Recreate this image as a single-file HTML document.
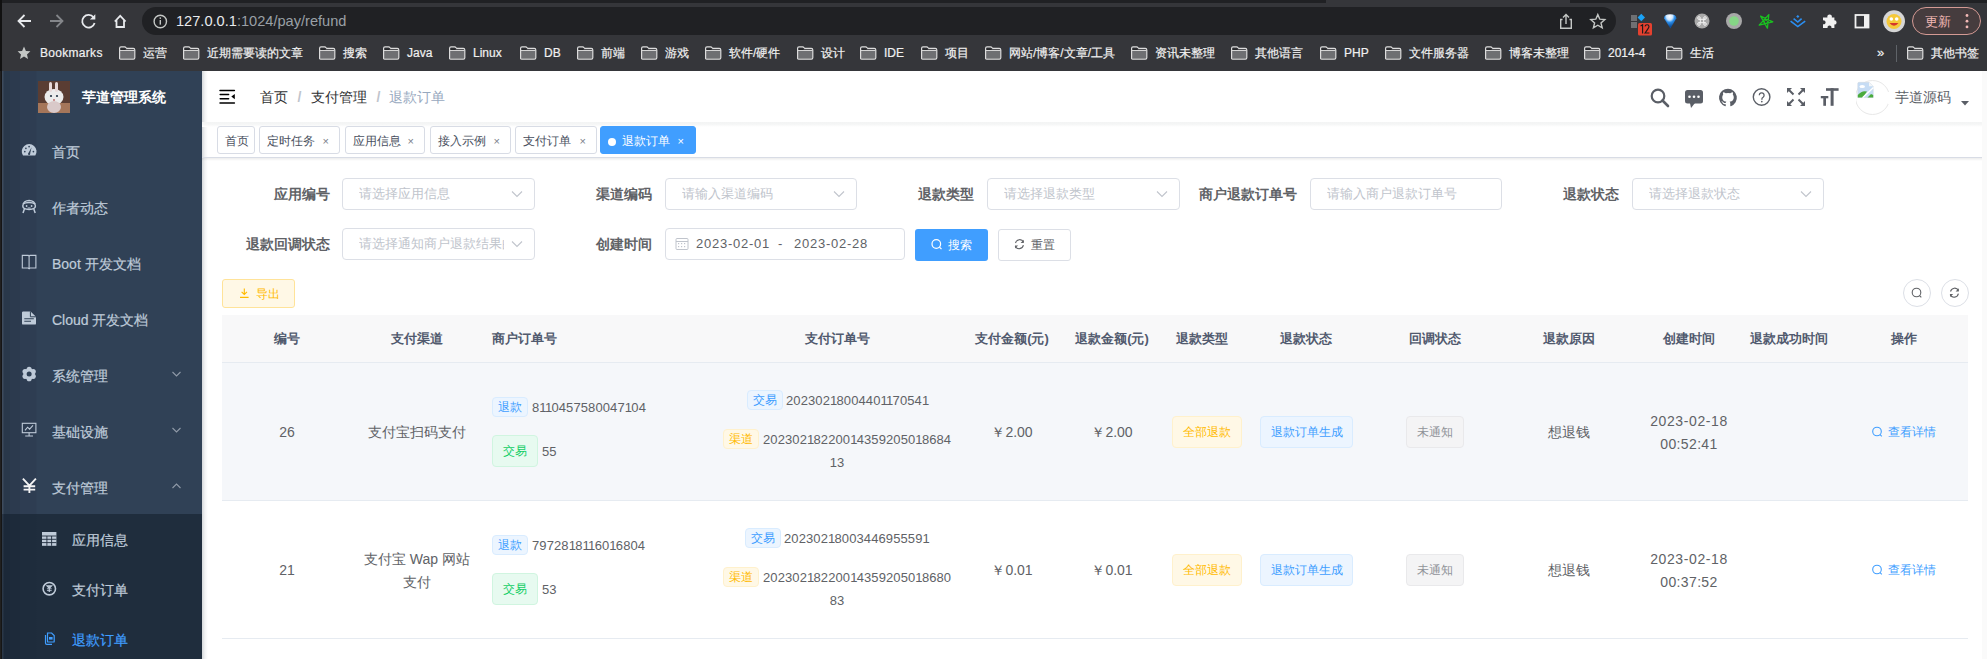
<!DOCTYPE html><html><head><meta charset="utf-8"><style>
*{margin:0;padding:0;box-sizing:border-box}
html,body{width:1987px;height:659px;overflow:hidden;background:#fff;font-family:"Liberation Sans",sans-serif}
.a{position:absolute;white-space:nowrap}
svg{position:absolute;overflow:visible}
#chrome{position:absolute;left:0;top:0;width:1987px;height:71px;background:#35363a}
.bm{position:absolute;top:44px;height:18px;font-size:12px;color:#f0f0f0;-webkit-text-stroke:.2px currentColor;line-height:18px;white-space:nowrap}
.fd{position:absolute;top:48.5px;width:16px;height:10.6px;border:1.6px solid #c9c9c9;border-radius:2px;background:#6b6c6f}
.fd:before{content:"";position:absolute;left:-1.6px;top:-2.6px;width:6.5px;height:2.4px;border:1.6px solid #c9c9c9;border-bottom:none;border-radius:2px 2px 0 0}
.fd:after{content:"";position:absolute;left:0;top:0;width:100%;height:2.5px;background:#35363a;border-bottom:1.2px solid #c9c9c9}
#side{position:absolute;left:0;top:71px;width:202px;height:588px;background:#304156}
.mi{position:absolute;font-size:14px;color:#bfcbd9;-webkit-text-stroke:.2px currentColor;line-height:20px;white-space:nowrap}
.tag{position:absolute;top:126px;height:28px;border:1px solid #d8dce5;border-radius:3px;color:#495060;background:#fff;font-size:12px;line-height:28px;white-space:nowrap}
.lbl{position:absolute;font-size:14px;font-weight:bold;color:#606266;line-height:20px;white-space:nowrap;text-align:right}
.inp{position:absolute;height:32px;border:1px solid #dcdfe6;border-radius:4px;background:#fff}
.ph{position:absolute;font-size:13px;color:#c0c4cc;line-height:30px;white-space:nowrap;top:0}
.th{position:absolute;top:329px;font-size:13px;font-weight:bold;color:#515a6e;line-height:20px;white-space:nowrap;text-align:center}
.td{position:absolute;font-size:14px;color:#606266;line-height:20px;white-space:nowrap}
.mt{position:absolute;height:20px;border:1px solid;border-radius:4px;font-size:12px;line-height:18px;text-align:center;white-space:nowrap}
.dt{position:absolute;height:32px;border:1px solid;border-radius:4px;font-size:12px;line-height:30px;text-align:center;white-space:nowrap}
.blue{background:#ecf5ff;border-color:#d9ecff;color:#409eff}
.green{background:#e7faf0;border-color:#d0f5e0;color:#13ce66}
.orange{background:#fff8e6;border-color:#fff1cc;color:#ffba00}
.grey{background:#f4f4f5;border-color:#e9e9eb;color:#909399}
</style></head><body>
<div id="chrome">
<div class="a" style="left:0;top:0;width:1326px;height:3px;background:#202124"></div>
<div class="a" style="left:1570px;top:0;width:417px;height:3px;background:#202124"></div>
<div class="a" style="left:0;top:0;width:2px;height:71px;background:#111"></div>
<svg style="left:0;top:0" width="200" height="40"><g fill="none" stroke-linecap="butt" stroke-linejoin="miter"><path d="M31 21H19 M24.5 15 L18.5 21 L24.5 27" stroke="#e8eaed" stroke-width="1.8"/><path d="M50 21H62 M56.5 15 L62.5 21 L56.5 27" stroke="#84868a" stroke-width="1.8"/><path d="M93.6 17.5 A6.3 6.3 0 1 0 94.6 23" stroke="#e8eaed" stroke-width="1.8"/><path d="M95.3 14.2 V19.6 H89.9 Z" fill="#e8eaed" stroke="none"/><path d="M114.8 21.5 L120.2 15.8 L125.6 21.5 M116.5 20 V27 H124 V20" stroke="#e8eaed" stroke-width="1.8"/></g></svg>
<div class="a" style="left:142px;top:7px;width:1474px;height:28px;border-radius:14px;background:#202124"></div>
<svg style="left:0;top:0" width="200" height="40"><circle cx="160.3" cy="21.5" r="6.2" fill="none" stroke="#c4c7c5" stroke-width="1.4"/><rect x="159.6" y="20" width="1.4" height="4.6" fill="#c4c7c5"/><rect x="159.6" y="17.4" width="1.4" height="1.5" fill="#c4c7c5"/></svg>
<div class="a" style="left:176px;top:12px;font-size:14.6px;line-height:18px;color:#e8eaed">127.0.0.1<span style="color:#9aa0a6">:1024/pay/refund</span></div>
<svg style="left:0;top:0" width="1987" height="40"><g fill="none" stroke="#c4c7c5" stroke-width="1.4"><path d="M1562.5 19.5 H1560.7 V28.3 H1571.3 V19.5 H1569.5"/><path d="M1566 24 V14.8 M1563 17.6 L1566 14.6 L1569 17.6"/><path d="M1597.8 14.6 L1599.8 19.2 L1604.8 19.6 L1601 22.9 L1602.2 27.8 L1597.8 25.2 L1593.4 27.8 L1594.6 22.9 L1590.8 19.6 L1595.8 19.2 Z"/></g></svg>
<svg style="left:0;top:0" width="1987" height="40"><rect x="1631" y="15" width="6" height="6" fill="#6f7073"/><rect x="1631" y="22" width="6" height="6" fill="#6f7073"/><path d="M1641.3 13.8 L1645 17.5 L1641.3 21.2 L1637.6 17.5 Z" fill="#1aa3f7"/><rect x="1638" y="23" width="14" height="12.5" rx="1.5" fill="#e5412f"/><defs><radialGradient id="gm" cx="0.45" cy="0.15" r="0.7"><stop offset="0" stop-color="#fff"/><stop offset=".35" stop-color="#cfe8ff"/><stop offset=".6" stop-color="#2b8de8"/><stop offset="1" stop-color="#0d4f9a"/></radialGradient></defs><path d="M1664 18.2 Q1664 14.2 1670.2 14.2 Q1676.4 14.2 1676.4 18.2 L1670.4 28.6 Z" fill="url(#gm)"/><circle cx="1702" cy="21" r="7.5" fill="#a9a9a9"/><g fill="none" stroke="#f3f3f3" stroke-width="1"><path d="M1700.3 19.3 V22.7 M1703.7 19.3 V22.7 M1698.6 19.3 H1705.4 M1698.6 22.7 H1705.4"/><circle cx="1699" cy="18" r="1.3"/><circle cx="1705" cy="18" r="1.3"/><circle cx="1699" cy="24" r="1.3"/><circle cx="1705" cy="24" r="1.3"/></g><circle cx="1734" cy="21" r="8" fill="#a8a8a8"/><circle cx="1734" cy="21" r="4.8" fill="#86d686"/><path d="M1768.8 14.6 L1767.4 28.2 L1760.6 16.1 L1772.8 21.8 L1759.2 25.1 Z" fill="none" stroke="#19c21f" stroke-width="1.3" stroke-linejoin="round"/><circle cx="1765.9" cy="21.8" r="1.6" fill="none" stroke="#19c21f" stroke-width="1"/><path d="M1790.6 21.1 L1797.8 26.6 L1805.2 21.1 M1793.6 18.6 L1797.8 22 L1801.6 18.6" fill="none" stroke="#2b8ff2" stroke-width="1.6"/><path d="M1797.8 14.9 L1799.4 16.5 L1797.8 18.1 L1796.2 16.5 Z" fill="#2b8ff2"/><path d="M1823 17.4 H1827.4 A2.3 2.3 0 1 1 1831.8 17.4 H1834.4 V20.2 A2.2 2.2 0 1 1 1834.4 24.6 V28 H1831.4 A2 2 0 1 0 1827.6 28 H1823 V24.2 A2 2 0 1 0 1823 20.4 Z" fill="#f1f1f1"/><rect x="1855.5" y="15" width="13" height="12.5" fill="none" stroke="#f1f1f1" stroke-width="1.8"/><rect x="1864" y="15" width="4.5" height="12.5" fill="#f1f1f1"/><circle cx="1894" cy="21.2" r="11" fill="#d6d6d6"/><circle cx="1894" cy="21.5" r="7.5" fill="#f5c93a"/><path d="M1889.5 23 Q1894 28.5 1898.5 23 Z" fill="#d4352d"/><circle cx="1891.3" cy="19" r="1.8" fill="#fff"/><circle cx="1896.7" cy="19" r="1.8" fill="#fff"/></svg>
<svg style="left:0;top:0" width="1987" height="40"><path d="M1640.6 26 L1642.6 24.8 V33.4 M1645 26.4 Q1645.3 24.8 1647.1 24.8 Q1649 24.8 1649 26.6 Q1649 28 1645 33 H1649.4" fill="none" stroke="#1a1a1a" stroke-width="1.1"/></svg>
<div class="a" style="left:1911.5px;top:6.8px;width:69.5px;height:28.6px;border:1.8px solid #d49a94;border-radius:14px;background:#463c3e"></div>
<div class="a" style="left:1925px;top:13px;font-size:13px;line-height:17px;color:#f2b8b5">更新</div>
<svg style="left:0;top:0" width="1987" height="40"><g fill="#f2b8b5"><circle cx="1967" cy="15.5" r="1.4"/><circle cx="1967" cy="21.2" r="1.4"/><circle cx="1967" cy="26.9" r="1.4"/></g></svg>
<svg style="left:0;top:0" width="40" height="71"><path d="M24 46.6 L25.9 50.9 L30.4 51.3 L27 54.4 L28 58.9 L24 56.5 L20 58.9 L21 54.4 L17.6 51.3 L22.1 50.9 Z" fill="#c4c7c5"/></svg>
<div class="bm" style="left:40px;letter-spacing:.3px">Bookmarks</div>
<div class="bm" style="left:143px">运营</div>
<div class="bm" style="left:207px">近期需要读的文章</div>
<div class="bm" style="left:343px">搜索</div>
<div class="bm" style="left:407px">Java</div>
<div class="bm" style="left:473px">Linux</div>
<div class="bm" style="left:544px">DB</div>
<div class="bm" style="left:601px">前端</div>
<div class="bm" style="left:665px">游戏</div>
<div class="bm" style="left:729px">软件/硬件</div>
<div class="bm" style="left:821px">设计</div>
<div class="bm" style="left:884px">IDE</div>
<div class="bm" style="left:945px">项目</div>
<div class="bm" style="left:1009px">网站/博客/文章/工具</div>
<div class="bm" style="left:1155px">资讯未整理</div>
<div class="bm" style="left:1255px">其他语言</div>
<div class="bm" style="left:1344px">PHP</div>
<div class="bm" style="left:1409px">文件服务器</div>
<div class="bm" style="left:1509px">博客未整理</div>
<div class="bm" style="left:1608px">2014-4</div>
<div class="bm" style="left:1690px">生活</div>
<div class="bm" style="left:1931px">其他书签</div>
<svg style="left:0;top:0" width="1987" height="71"><g transform="translate(119,0)"><rect x="1" y="50.6" width="14.6" height="7.8" fill="#6e6f72"/><path d="M.6 58.2 V48.3 Q.6 46.9 2 46.9 H5.6 Q6.4 46.9 7 47.6 L7.8 48.4 H14.3 Q15.8 48.4 15.8 49.9 V57.8 Q15.8 59.2 14.4 59.2 H1.6 Q.6 59.2 .6 58.2 Z" fill="none" stroke="#dcdcdc" stroke-width="1.2"/><path d="M.8 50.4 H15.6" stroke="#dcdcdc" stroke-width="1.1"/><path d="M1.6 49.3 H6.6" stroke="#1e1f22" stroke-width="1.1"/></g><g transform="translate(183,0)"><rect x="1" y="50.6" width="14.6" height="7.8" fill="#6e6f72"/><path d="M.6 58.2 V48.3 Q.6 46.9 2 46.9 H5.6 Q6.4 46.9 7 47.6 L7.8 48.4 H14.3 Q15.8 48.4 15.8 49.9 V57.8 Q15.8 59.2 14.4 59.2 H1.6 Q.6 59.2 .6 58.2 Z" fill="none" stroke="#dcdcdc" stroke-width="1.2"/><path d="M.8 50.4 H15.6" stroke="#dcdcdc" stroke-width="1.1"/><path d="M1.6 49.3 H6.6" stroke="#1e1f22" stroke-width="1.1"/></g><g transform="translate(319,0)"><rect x="1" y="50.6" width="14.6" height="7.8" fill="#6e6f72"/><path d="M.6 58.2 V48.3 Q.6 46.9 2 46.9 H5.6 Q6.4 46.9 7 47.6 L7.8 48.4 H14.3 Q15.8 48.4 15.8 49.9 V57.8 Q15.8 59.2 14.4 59.2 H1.6 Q.6 59.2 .6 58.2 Z" fill="none" stroke="#dcdcdc" stroke-width="1.2"/><path d="M.8 50.4 H15.6" stroke="#dcdcdc" stroke-width="1.1"/><path d="M1.6 49.3 H6.6" stroke="#1e1f22" stroke-width="1.1"/></g><g transform="translate(383,0)"><rect x="1" y="50.6" width="14.6" height="7.8" fill="#6e6f72"/><path d="M.6 58.2 V48.3 Q.6 46.9 2 46.9 H5.6 Q6.4 46.9 7 47.6 L7.8 48.4 H14.3 Q15.8 48.4 15.8 49.9 V57.8 Q15.8 59.2 14.4 59.2 H1.6 Q.6 59.2 .6 58.2 Z" fill="none" stroke="#dcdcdc" stroke-width="1.2"/><path d="M.8 50.4 H15.6" stroke="#dcdcdc" stroke-width="1.1"/><path d="M1.6 49.3 H6.6" stroke="#1e1f22" stroke-width="1.1"/></g><g transform="translate(449,0)"><rect x="1" y="50.6" width="14.6" height="7.8" fill="#6e6f72"/><path d="M.6 58.2 V48.3 Q.6 46.9 2 46.9 H5.6 Q6.4 46.9 7 47.6 L7.8 48.4 H14.3 Q15.8 48.4 15.8 49.9 V57.8 Q15.8 59.2 14.4 59.2 H1.6 Q.6 59.2 .6 58.2 Z" fill="none" stroke="#dcdcdc" stroke-width="1.2"/><path d="M.8 50.4 H15.6" stroke="#dcdcdc" stroke-width="1.1"/><path d="M1.6 49.3 H6.6" stroke="#1e1f22" stroke-width="1.1"/></g><g transform="translate(520,0)"><rect x="1" y="50.6" width="14.6" height="7.8" fill="#6e6f72"/><path d="M.6 58.2 V48.3 Q.6 46.9 2 46.9 H5.6 Q6.4 46.9 7 47.6 L7.8 48.4 H14.3 Q15.8 48.4 15.8 49.9 V57.8 Q15.8 59.2 14.4 59.2 H1.6 Q.6 59.2 .6 58.2 Z" fill="none" stroke="#dcdcdc" stroke-width="1.2"/><path d="M.8 50.4 H15.6" stroke="#dcdcdc" stroke-width="1.1"/><path d="M1.6 49.3 H6.6" stroke="#1e1f22" stroke-width="1.1"/></g><g transform="translate(577,0)"><rect x="1" y="50.6" width="14.6" height="7.8" fill="#6e6f72"/><path d="M.6 58.2 V48.3 Q.6 46.9 2 46.9 H5.6 Q6.4 46.9 7 47.6 L7.8 48.4 H14.3 Q15.8 48.4 15.8 49.9 V57.8 Q15.8 59.2 14.4 59.2 H1.6 Q.6 59.2 .6 58.2 Z" fill="none" stroke="#dcdcdc" stroke-width="1.2"/><path d="M.8 50.4 H15.6" stroke="#dcdcdc" stroke-width="1.1"/><path d="M1.6 49.3 H6.6" stroke="#1e1f22" stroke-width="1.1"/></g><g transform="translate(641,0)"><rect x="1" y="50.6" width="14.6" height="7.8" fill="#6e6f72"/><path d="M.6 58.2 V48.3 Q.6 46.9 2 46.9 H5.6 Q6.4 46.9 7 47.6 L7.8 48.4 H14.3 Q15.8 48.4 15.8 49.9 V57.8 Q15.8 59.2 14.4 59.2 H1.6 Q.6 59.2 .6 58.2 Z" fill="none" stroke="#dcdcdc" stroke-width="1.2"/><path d="M.8 50.4 H15.6" stroke="#dcdcdc" stroke-width="1.1"/><path d="M1.6 49.3 H6.6" stroke="#1e1f22" stroke-width="1.1"/></g><g transform="translate(705,0)"><rect x="1" y="50.6" width="14.6" height="7.8" fill="#6e6f72"/><path d="M.6 58.2 V48.3 Q.6 46.9 2 46.9 H5.6 Q6.4 46.9 7 47.6 L7.8 48.4 H14.3 Q15.8 48.4 15.8 49.9 V57.8 Q15.8 59.2 14.4 59.2 H1.6 Q.6 59.2 .6 58.2 Z" fill="none" stroke="#dcdcdc" stroke-width="1.2"/><path d="M.8 50.4 H15.6" stroke="#dcdcdc" stroke-width="1.1"/><path d="M1.6 49.3 H6.6" stroke="#1e1f22" stroke-width="1.1"/></g><g transform="translate(797,0)"><rect x="1" y="50.6" width="14.6" height="7.8" fill="#6e6f72"/><path d="M.6 58.2 V48.3 Q.6 46.9 2 46.9 H5.6 Q6.4 46.9 7 47.6 L7.8 48.4 H14.3 Q15.8 48.4 15.8 49.9 V57.8 Q15.8 59.2 14.4 59.2 H1.6 Q.6 59.2 .6 58.2 Z" fill="none" stroke="#dcdcdc" stroke-width="1.2"/><path d="M.8 50.4 H15.6" stroke="#dcdcdc" stroke-width="1.1"/><path d="M1.6 49.3 H6.6" stroke="#1e1f22" stroke-width="1.1"/></g><g transform="translate(860,0)"><rect x="1" y="50.6" width="14.6" height="7.8" fill="#6e6f72"/><path d="M.6 58.2 V48.3 Q.6 46.9 2 46.9 H5.6 Q6.4 46.9 7 47.6 L7.8 48.4 H14.3 Q15.8 48.4 15.8 49.9 V57.8 Q15.8 59.2 14.4 59.2 H1.6 Q.6 59.2 .6 58.2 Z" fill="none" stroke="#dcdcdc" stroke-width="1.2"/><path d="M.8 50.4 H15.6" stroke="#dcdcdc" stroke-width="1.1"/><path d="M1.6 49.3 H6.6" stroke="#1e1f22" stroke-width="1.1"/></g><g transform="translate(921,0)"><rect x="1" y="50.6" width="14.6" height="7.8" fill="#6e6f72"/><path d="M.6 58.2 V48.3 Q.6 46.9 2 46.9 H5.6 Q6.4 46.9 7 47.6 L7.8 48.4 H14.3 Q15.8 48.4 15.8 49.9 V57.8 Q15.8 59.2 14.4 59.2 H1.6 Q.6 59.2 .6 58.2 Z" fill="none" stroke="#dcdcdc" stroke-width="1.2"/><path d="M.8 50.4 H15.6" stroke="#dcdcdc" stroke-width="1.1"/><path d="M1.6 49.3 H6.6" stroke="#1e1f22" stroke-width="1.1"/></g><g transform="translate(985,0)"><rect x="1" y="50.6" width="14.6" height="7.8" fill="#6e6f72"/><path d="M.6 58.2 V48.3 Q.6 46.9 2 46.9 H5.6 Q6.4 46.9 7 47.6 L7.8 48.4 H14.3 Q15.8 48.4 15.8 49.9 V57.8 Q15.8 59.2 14.4 59.2 H1.6 Q.6 59.2 .6 58.2 Z" fill="none" stroke="#dcdcdc" stroke-width="1.2"/><path d="M.8 50.4 H15.6" stroke="#dcdcdc" stroke-width="1.1"/><path d="M1.6 49.3 H6.6" stroke="#1e1f22" stroke-width="1.1"/></g><g transform="translate(1131,0)"><rect x="1" y="50.6" width="14.6" height="7.8" fill="#6e6f72"/><path d="M.6 58.2 V48.3 Q.6 46.9 2 46.9 H5.6 Q6.4 46.9 7 47.6 L7.8 48.4 H14.3 Q15.8 48.4 15.8 49.9 V57.8 Q15.8 59.2 14.4 59.2 H1.6 Q.6 59.2 .6 58.2 Z" fill="none" stroke="#dcdcdc" stroke-width="1.2"/><path d="M.8 50.4 H15.6" stroke="#dcdcdc" stroke-width="1.1"/><path d="M1.6 49.3 H6.6" stroke="#1e1f22" stroke-width="1.1"/></g><g transform="translate(1231,0)"><rect x="1" y="50.6" width="14.6" height="7.8" fill="#6e6f72"/><path d="M.6 58.2 V48.3 Q.6 46.9 2 46.9 H5.6 Q6.4 46.9 7 47.6 L7.8 48.4 H14.3 Q15.8 48.4 15.8 49.9 V57.8 Q15.8 59.2 14.4 59.2 H1.6 Q.6 59.2 .6 58.2 Z" fill="none" stroke="#dcdcdc" stroke-width="1.2"/><path d="M.8 50.4 H15.6" stroke="#dcdcdc" stroke-width="1.1"/><path d="M1.6 49.3 H6.6" stroke="#1e1f22" stroke-width="1.1"/></g><g transform="translate(1320,0)"><rect x="1" y="50.6" width="14.6" height="7.8" fill="#6e6f72"/><path d="M.6 58.2 V48.3 Q.6 46.9 2 46.9 H5.6 Q6.4 46.9 7 47.6 L7.8 48.4 H14.3 Q15.8 48.4 15.8 49.9 V57.8 Q15.8 59.2 14.4 59.2 H1.6 Q.6 59.2 .6 58.2 Z" fill="none" stroke="#dcdcdc" stroke-width="1.2"/><path d="M.8 50.4 H15.6" stroke="#dcdcdc" stroke-width="1.1"/><path d="M1.6 49.3 H6.6" stroke="#1e1f22" stroke-width="1.1"/></g><g transform="translate(1385,0)"><rect x="1" y="50.6" width="14.6" height="7.8" fill="#6e6f72"/><path d="M.6 58.2 V48.3 Q.6 46.9 2 46.9 H5.6 Q6.4 46.9 7 47.6 L7.8 48.4 H14.3 Q15.8 48.4 15.8 49.9 V57.8 Q15.8 59.2 14.4 59.2 H1.6 Q.6 59.2 .6 58.2 Z" fill="none" stroke="#dcdcdc" stroke-width="1.2"/><path d="M.8 50.4 H15.6" stroke="#dcdcdc" stroke-width="1.1"/><path d="M1.6 49.3 H6.6" stroke="#1e1f22" stroke-width="1.1"/></g><g transform="translate(1485,0)"><rect x="1" y="50.6" width="14.6" height="7.8" fill="#6e6f72"/><path d="M.6 58.2 V48.3 Q.6 46.9 2 46.9 H5.6 Q6.4 46.9 7 47.6 L7.8 48.4 H14.3 Q15.8 48.4 15.8 49.9 V57.8 Q15.8 59.2 14.4 59.2 H1.6 Q.6 59.2 .6 58.2 Z" fill="none" stroke="#dcdcdc" stroke-width="1.2"/><path d="M.8 50.4 H15.6" stroke="#dcdcdc" stroke-width="1.1"/><path d="M1.6 49.3 H6.6" stroke="#1e1f22" stroke-width="1.1"/></g><g transform="translate(1584,0)"><rect x="1" y="50.6" width="14.6" height="7.8" fill="#6e6f72"/><path d="M.6 58.2 V48.3 Q.6 46.9 2 46.9 H5.6 Q6.4 46.9 7 47.6 L7.8 48.4 H14.3 Q15.8 48.4 15.8 49.9 V57.8 Q15.8 59.2 14.4 59.2 H1.6 Q.6 59.2 .6 58.2 Z" fill="none" stroke="#dcdcdc" stroke-width="1.2"/><path d="M.8 50.4 H15.6" stroke="#dcdcdc" stroke-width="1.1"/><path d="M1.6 49.3 H6.6" stroke="#1e1f22" stroke-width="1.1"/></g><g transform="translate(1666,0)"><rect x="1" y="50.6" width="14.6" height="7.8" fill="#6e6f72"/><path d="M.6 58.2 V48.3 Q.6 46.9 2 46.9 H5.6 Q6.4 46.9 7 47.6 L7.8 48.4 H14.3 Q15.8 48.4 15.8 49.9 V57.8 Q15.8 59.2 14.4 59.2 H1.6 Q.6 59.2 .6 58.2 Z" fill="none" stroke="#dcdcdc" stroke-width="1.2"/><path d="M.8 50.4 H15.6" stroke="#dcdcdc" stroke-width="1.1"/><path d="M1.6 49.3 H6.6" stroke="#1e1f22" stroke-width="1.1"/></g><g transform="translate(1907,0)"><rect x="1" y="50.6" width="14.6" height="7.8" fill="#6e6f72"/><path d="M.6 58.2 V48.3 Q.6 46.9 2 46.9 H5.6 Q6.4 46.9 7 47.6 L7.8 48.4 H14.3 Q15.8 48.4 15.8 49.9 V57.8 Q15.8 59.2 14.4 59.2 H1.6 Q.6 59.2 .6 58.2 Z" fill="none" stroke="#dcdcdc" stroke-width="1.2"/><path d="M.8 50.4 H15.6" stroke="#dcdcdc" stroke-width="1.1"/><path d="M1.6 49.3 H6.6" stroke="#1e1f22" stroke-width="1.1"/></g></svg>
<div class="bm" style="left:1877px;font-size:13px">»</div>
<div class="a" style="left:1896px;top:45px;width:1px;height:17px;background:#5f6368"></div>
</div>
<div id="side">
<div class="a" style="left:0;top:443px;width:202px;height:145px;background:#1f2d3d"></div>
<div class="a" style="left:0;top:0;width:37px;height:588px;background:linear-gradient(to right,#262626 0px,#151515 1.5px,#3d4b5c 2px,#3d4b5c 3px,#29384a 4px,#29384a 10px,#2c3a4e 10px,#2c3a4e 20px,#2e3d52 20px,#2e3d52 36px,#304156 37px)"></div>
<div class="a" style="left:0;top:443px;width:37px;height:145px;background:linear-gradient(to right,#262626 0px,#151515 1.5px,#2a3747 2px,#2a3747 3px,#1b2838 4px,#1b2838 10px,#1d2a3a 10px,#1d2a3a 20px,#1e2c3c 20px,#1e2c3c 36px,#1f2d3d 37px)"></div>
</div>
<svg style="left:38px;top:81px" width="32" height="32"><rect width="32" height="32" fill="#5a3d33"/><rect y="22" width="32" height="10" fill="#a5765a"/><ellipse cx="16" cy="16" rx="9.5" ry="8" fill="#ececec"/><ellipse cx="16" cy="26" rx="7" ry="6" fill="#d9c9c9"/><rect x="11" y="1" width="3" height="10" rx="1.5" fill="#e8dada"/><rect x="17" y="1" width="3" height="10" rx="1.5" fill="#e8dada"/><circle cx="13" cy="15" r="1.1" fill="#234"/><circle cx="19" cy="15" r="1.1" fill="#234"/><circle cx="16" cy="19" r="0.9" fill="#b66"/></svg>
<div class="a" style="left:82px;top:87px;font-size:14px;font-weight:bold;color:#fff;line-height:20px">芋道管理系统</div>
<div class="mi" style="left:52px;top:142px">首页</div>
<div class="mi" style="left:52px;top:198px">作者动态</div>
<div class="mi" style="left:52px;top:254px">Boot 开发文档</div>
<div class="mi" style="left:52px;top:310px">Cloud 开发文档</div>
<div class="mi" style="left:52px;top:366px">系统管理</div>
<div class="mi" style="left:52px;top:422px">基础设施</div>
<div class="mi" style="left:52px;top:478px">支付管理</div>
<svg style="left:0;top:0" width="202" height="659"><g fill="none" stroke="#909aa8" stroke-width="1.1"><path d="M172.5 372 L176.5 376 L180.5 372"/><path d="M172.5 428 L176.5 432 L180.5 428"/><path d="M172.5 488 L176.5 484 L180.5 488"/></g></svg>
<div class="mi" style="left:72px;top:530px;color:#bfcbd9">应用信息</div>
<div class="mi" style="left:72px;top:580px;color:#bfcbd9">支付订单</div>
<div class="mi" style="left:72px;top:630px;color:#409eff">退款订单</div>
<svg style="left:0;top:0" width="202" height="659"><path d="M23 155.6 A7.4 7.4 0 1 1 35.3 155.6 Z" fill="#bfcbd9"/><path d="M28.2 153.6 L31.6 147.2 L30 154.2 Z" fill="#304156"/><circle cx="29.1" cy="154" r="1.1" fill="#304156"/><g fill="#304156"><circle cx="24.8" cy="151.6" r=".85"/><circle cx="25.9" cy="148.3" r=".85"/><circle cx="29.1" cy="146.6" r=".85"/><circle cx="33.4" cy="151.6" r=".85"/></g><g fill="none" stroke="#bfcbd9" stroke-width="1.5"><path d="M22.8 206 C22.8 198.5 35.4 198.5 35.4 206 C35.4 210.5 22.8 210.5 22.8 206 Z"/><path d="M24.4 209 L23 213 M33.8 209 L35.2 213"/><path d="M23 204 C26 202 32 202 35.2 204"/></g><g fill="#bfcbd9"><circle cx="26.6" cy="206" r=".9"/><circle cx="31.6" cy="206" r=".9"/><rect x="27.5" y="207.6" width="3.2" height="1" rx=".5"/></g><g fill="none" stroke="#bfcbd9" stroke-width="1.1"><path d="M22.3 255.4 H28.3 L29.1 256.2 L29.9 255.4 H35.9 V268 H29.9 L29.1 268.8 L28.3 268 H22.3 Z"/><path d="M29.1 256.2 V268.6"/></g><path d="M23.2 311.4 H30.6 L36 316.8 V323.4 A1.2 1.2 0 0 1 34.8 324.6 H23.2 A1.2 1.2 0 0 1 22 323.4 V312.6 A1.2 1.2 0 0 1 23.2 311.4 Z" fill="#bfcbd9"/><path d="M30.4 311.4 V316.8 H36" fill="none" stroke="#304156" stroke-width="1"/><g stroke="#304156" stroke-width="1.1"><path d="M24.3 318.7 H33.8 M24.3 321.3 H31"/></g><g transform="translate(29.15,374)" fill="#bfcbd9"><circle r="5.6"/><circle cx="4.11" cy="2.37" r="2.55"/><circle cx="0.00" cy="4.75" r="2.55"/><circle cx="-4.11" cy="2.37" r="2.55"/><circle cx="-4.11" cy="-2.38" r="2.55"/><circle cx="-0.00" cy="-4.75" r="2.55"/><circle cx="4.11" cy="-2.38" r="2.55"/><circle r="2.5" fill="#304156"/></g><g fill="none" stroke="#bfcbd9" stroke-width="1.1"><rect x="22.3" y="423.3" width="13.6" height="9.4"/><path d="M29.1 432.7 V435.8 M25.2 436 H33"/><path d="M25 430.4 L27.6 427.2 L29.6 429.2 L33 425.4"/></g><g fill="none" stroke="#f4f4f5" stroke-width="1.9"><path d="M22.9 478.6 L29.4 485.6 L35.9 478.6 M29.4 485.6 V493 M23.6 486.2 H35.2 M23.6 489.6 H35.2"/></g><rect x="42" y="532" width="14.4" height="13.8" fill="#bfcbd9"/><g stroke="#1f2d3d" stroke-width=".9"><path d="M42 536 H56.4 M42 539.3 H56.4 M42 542.6 H56.4 M46.9 536 V545.8 M51.6 536 V545.8"/></g><circle cx="49.3" cy="588.7" r="6.2" fill="none" stroke="#bfcbd9" stroke-width="1.6"/><path d="M47 585.8 L49.3 588.3 L51.6 585.8 Z M49.3 586.6 V592" stroke="#bfcbd9" stroke-width="1.2" fill="none"/><path d="M46.9 588.8 H51.7 M46.9 590.6 H51.7" stroke="#bfcbd9" stroke-width=".9"/><g fill="none" stroke="#409eff" stroke-width="1.2"><path d="M45.5 635 V643 A1.3 1.3 0 0 0 46.8 644.3 H52"/><path d="M47.5 633 H51.6 L54.2 635.6 V641.4 A.6 .6 0 0 1 53.6 642 H48.1 A.6 .6 0 0 1 47.5 641.4 Z"/></g><rect x="49" y="637" width="3.6" height="2.6" fill="#409eff"/></svg>
<div class="a" style="left:202px;top:71px;width:6px;height:588px;background:linear-gradient(to right,rgba(0,21,41,.17),rgba(0,21,41,.05) 50%,rgba(0,21,41,0))"></div>
<svg style="left:0;top:0" width="260" height="120"><g stroke="#000" stroke-width="1.5" stroke-linecap="round"><path d="M220 90.4 H234.4 M220.2 94.6 H228.6 M220.2 98.8 H228.6 M220 103 H234.4"/></g><path d="M234.8 94 V99.2 L231.3 96.6 Z" fill="#000"/></svg>
<div class="a" style="left:260px;top:87px;font-size:14px;line-height:20px;color:#303133">首页</div>
<div class="a" style="left:297.5px;top:87px;font-size:14px;line-height:20px;color:#c0c4cc;font-weight:bold">/</div>
<div class="a" style="left:311px;top:87px;font-size:14px;line-height:20px;color:#303133">支付管理</div>
<div class="a" style="left:376.5px;top:87px;font-size:14px;line-height:20px;color:#c0c4cc;font-weight:bold">/</div>
<div class="a" style="left:389px;top:87px;font-size:14px;line-height:20px;color:#97a8be">退款订单</div>
<svg style="left:0;top:0" width="1987" height="120"><g fill="#5a5e66" stroke="#5a5e66"><circle cx="1658" cy="96" r="6.3" fill="none" stroke-width="2.2"/><path d="M1662.5 100.5 L1668 106" stroke-width="2.6" stroke-linecap="round"/><rect x="1685" y="90" width="18" height="13.5" rx="2.5" stroke="none"/><path d="M1690 103 L1691 108 L1695 103 Z" stroke="none"/><g fill="#fff" stroke="none"><circle cx="1689.5" cy="96.8" r="1.3"/><circle cx="1694" cy="96.8" r="1.3"/><circle cx="1698.5" cy="96.8" r="1.3"/></g></g><path fill="#5a5e66" d="M1728 88.7 a9 9 0 0 0 -2.85 17.54 c.45.08.62-.2.62-.43v-1.6c-2.5.54-3.03-1.2-3.03-1.2-.41-1.05-1-1.33-1-1.33-.82-.56.06-.55.06-.55.9.06 1.38.93 1.38.93.8 1.38 2.1.98 2.62.75.08-.58.31-.98.57-1.2-2-.23-4.1-1-4.1-4.45 0-.98.35-1.79.93-2.42-.1-.23-.4-1.15.08-2.38 0 0 .76-.24 2.48.92a8.6 8.6 0 0 1 4.5 0c1.72-1.16 2.48-.92 2.48-.92.49 1.23.18 2.15.09 2.38.58.63.92 1.44.92 2.42 0 3.46-2.1 4.22-4.1 4.44.32.28.61.83.61 1.67v2.48c0 .24.16.52.62.43A9 9 0 0 0 1728 88.7z"/><circle cx="1761.6" cy="97" r="8.3" fill="none" stroke="#5a5e66" stroke-width="1.4"/><path d="M1759.3 95.2 a2.4 2.4 0 1 1 3.8 2 c-.8.5-1.2 1-1.2 1.9 v.6" fill="none" stroke="#5a5e66" stroke-width="1.3"/><circle cx="1761.8" cy="101.6" r=".85" fill="#5a5e66"/><g fill="#5a5e66"><path d="M1787 88 H1792 L1787 93 Z"/><path d="M1805 88 V93 L1800 88 Z"/><path d="M1787 106 V101 L1792 106 Z"/><path d="M1805 106 H1800 L1805 101 Z"/></g><g stroke="#5a5e66" stroke-width="2"><path d="M1789 90 L1793.5 94.5 M1803 90 L1798.5 94.5 M1789 104 L1793.5 99.5 M1803 104 L1798.5 99.5"/></g><g fill="#5a5e66"><rect x="1826" y="88.2" width="12.6" height="2.6"/><rect x="1830.6" y="88.2" width="3" height="17.6"/><rect x="1820.8" y="96" width="7.5" height="2.3"/><rect x="1823.3" y="96" width="2.7" height="9.8"/></g></svg>
<div class="a" style="left:1855px;top:80px;width:35px;height:35px;border-radius:50%;border:1px solid #e8e8e8"></div>
<div class="a" style="left:1850px;top:92px;width:6px;height:12px;background:#fff"></div><div class="a" style="left:1888px;top:92px;width:6px;height:12px;background:#fff"></div>
<svg style="left:1856.5px;top:81px" width="18" height="18"><path d="M.8 2.5 Q.8 1.3 2 1.3 H12 L16.2 5.3 V16.6 H.8 Z" fill="#c6dcf4" stroke="#d0d8e0" stroke-width=".6"/><path d="M12 1.3 V5.3 H16.2 Z" fill="#f4f6f8"/><ellipse cx="5.2" cy="5.6" rx="2.8" ry="1.5" fill="#fff"/><path d="M.8 16.6 V14 Q5 9 10 10.5 L6 16.6 Z" fill="#4aab3c"/><path d="M10.5 16.6 L14 13 L16.2 14 V16.6 Z" fill="#4aab3c"/><path d="M5.5 16.8 L16.5 6.5" stroke="#fff" stroke-width="1.4"/></svg>
<div class="a" style="left:1895px;top:87px;font-size:14px;line-height:20px;color:#5a5e66">芋道源码</div>
<svg style="left:0;top:0" width="1987" height="120"><path d="M1961 101 H1969 L1965 105.5 Z" fill="#5a5e66"/></svg>
<div class="a" style="left:202px;top:122px;width:1785px;height:4.5px;background:linear-gradient(to bottom,#f3f4f4,#f5f6f6 45%,#fff)"></div>
<div class="a" style="left:202px;top:157px;width:1785px;height:1px;background:#d8dce5"></div>
<div class="a" style="left:202px;top:158px;width:1785px;height:3px;background:linear-gradient(to bottom,rgba(0,0,0,.07),rgba(0,0,0,0))"></div>
<div class="tag" style="left:217px;width:38px;padding-left:7px">首页</div>
<div class="tag" style="left:259px;width:81px;padding-left:7px">定时任务</div>
<div class="a" style="left:322.5px;top:134px;font-size:11px;line-height:14px;color:#7a7f8a">×</div>
<div class="tag" style="left:345px;width:80px;padding-left:7px">应用信息</div>
<div class="a" style="left:407.5px;top:134px;font-size:11px;line-height:14px;color:#7a7f8a">×</div>
<div class="tag" style="left:430px;width:81px;padding-left:7px">接入示例</div>
<div class="a" style="left:493.5px;top:134px;font-size:11px;line-height:14px;color:#7a7f8a">×</div>
<div class="tag" style="left:515px;width:82px;padding-left:7px">支付订单</div>
<div class="a" style="left:579.5px;top:134px;font-size:11px;line-height:14px;color:#7a7f8a">×</div>
<div class="tag" style="left:600px;width:96px;background:#409eff;border-color:#409eff;color:#fff;padding-left:21px">退款订单</div>
<div class="a" style="left:608px;top:137.6px;width:8.2px;height:8.2px;border-radius:50%;background:#fff"></div>
<div class="a" style="left:677.5px;top:134px;font-size:11px;line-height:14px;color:#fff">×</div>
<div class="lbl" style="left:130px;width:200px;top:184px">应用编号</div>
<div class="lbl" style="left:452px;width:200px;top:184px">渠道编码</div>
<div class="lbl" style="left:774px;width:200px;top:184px">退款类型</div>
<div class="lbl" style="left:1097px;width:200px;top:184px">商户退款订单号</div>
<div class="lbl" style="left:1419px;width:200px;top:184px">退款状态</div>
<div class="lbl" style="left:130px;width:200px;top:234px">退款回调状态</div>
<div class="lbl" style="left:452px;width:200px;top:234px">创建时间</div>
<div class="inp" style="left:342px;top:178px;width:193px"><div class="ph" style="left:16px;width:145px;overflow:hidden">请选择应用信息</div></div>
<div class="inp" style="left:665px;top:178px;width:192px"><div class="ph" style="left:16px;width:144px;overflow:hidden">请输入渠道编码</div></div>
<div class="inp" style="left:987px;top:178px;width:193px"><div class="ph" style="left:16px;width:145px;overflow:hidden">请选择退款类型</div></div>
<div class="inp" style="left:1310px;top:178px;width:192px"><div class="ph" style="left:16px;width:172px;overflow:hidden">请输入商户退款订单号</div></div>
<div class="inp" style="left:1632px;top:178px;width:192px"><div class="ph" style="left:16px;width:144px;overflow:hidden">请选择退款状态</div></div>
<div class="inp" style="left:342px;top:228px;width:193px"><div class="ph" style="left:16px;width:145px;overflow:hidden">请选择通知商户退款结果的状态</div></div>
<div class="inp" style="left:665px;top:228px;width:240px"></div>
<div class="a" style="left:696px;top:235px;font-size:13px;letter-spacing:.75px;line-height:18px;color:#606266">2023-02-01</div>
<div class="a" style="left:778px;top:235px;font-size:13px;line-height:18px;color:#606266">-</div>
<div class="a" style="left:794px;top:235px;font-size:13px;letter-spacing:.75px;line-height:18px;color:#606266">2023-02-28</div>
<div class="a" style="left:914.6px;top:228.5px;width:73px;height:32.3px;border-radius:3px;background:#409eff"></div>
<div class="a" style="left:948px;top:236.8px;font-size:12px;line-height:17px;color:#fff">搜索</div>
<div class="a" style="left:997.5px;top:228.5px;width:73px;height:32.3px;border-radius:3px;border:1px solid #dcdfe6;background:#fff"></div>
<div class="a" style="left:1031px;top:236.8px;font-size:12px;line-height:17px;color:#606266">重置</div>
<div class="a" style="left:222px;top:279px;width:73px;height:29px;border-radius:3px;border:1px solid #ffe399;background:#fff8e6"></div>
<div class="a" style="left:255.7px;top:286px;font-size:12px;line-height:17px;color:#ffba00">导出</div>
<div class="a" style="left:1903px;top:279px;width:28px;height:28px;border-radius:50%;border:1px solid #dcdfe6"></div>
<div class="a" style="left:1941px;top:279px;width:28px;height:28px;border-radius:50%;border:1px solid #dcdfe6"></div>
<div class="a" style="left:1982px;top:71px;width:5px;height:588px;background:#fafafa"></div>
<div class="a" style="left:222px;top:315px;width:1746px;height:47px;background:#f8f8f9"></div>
<div class="a" style="left:222px;top:362px;width:1746px;height:1px;background:#e6ebf1"></div>
<div class="a" style="left:222px;top:363px;width:1746px;height:137px;background:#f5f7fa"></div>
<div class="a" style="left:222px;top:500px;width:1746px;height:1px;background:#e6ebf1"></div>
<div class="a" style="left:222px;top:638px;width:1746px;height:1px;background:#e6ebf1"></div>
<div class="th" style="left:187px;width:200px">编号</div>
<div class="th" style="left:317px;width:200px">支付渠道</div>
<div class="th" style="left:737px;width:200px">支付订单号</div>
<div class="th" style="left:912px;width:200px">支付金额(元)</div>
<div class="th" style="left:1012px;width:200px">退款金额(元)</div>
<div class="th" style="left:1102px;width:200px">退款类型</div>
<div class="th" style="left:1206px;width:200px">退款状态</div>
<div class="th" style="left:1335px;width:200px">回调状态</div>
<div class="th" style="left:1469px;width:200px">退款原因</div>
<div class="th" style="left:1589px;width:200px">创建时间</div>
<div class="th" style="left:1689px;width:200px">退款成功时间</div>
<div class="th" style="left:1804px;width:200px">操作</div>
<div class="th" style="left:492px;text-align:left">商户订单号</div>
<div class="td" style="left:137px;width:300px;text-align:center;top:422.0px;font-size:14px;line-height:20px;color:#606266">26</div>
<div class="td" style="left:267px;width:300px;text-align:center;top:422.0px;font-size:14px;line-height:20px;color:#606266">支付宝扫码支付</div>
<div class="mt blue" style="left:492px;top:397px;width:36px">退款</div>
<div class="td" style="left:532px;top:398.0px;font-size:13px;letter-spacing:.1px;line-height:20px;color:#606266">8<span style="letter-spacing:-.7px">1</span><span style="letter-spacing:-.7px">1</span>0457580047<span style="letter-spacing:-.7px">1</span>04</div>
<div class="dt green" style="left:492px;top:435px;width:46px">交易</div>
<div class="td" style="left:542px;top:442.0px;font-size:13px;line-height:20px;color:#606266">55</div>
<div class="mt blue" style="left:747px;top:390px;width:36px">交易</div>
<div class="td" style="left:786px;top:391.0px;font-size:13px;letter-spacing:.1px;line-height:20px;color:#606266">202302<span style="letter-spacing:-.7px">1</span>800440<span style="letter-spacing:-.7px">1</span><span style="letter-spacing:-.7px">1</span>7054<span style="letter-spacing:-.7px">1</span></div>
<div class="mt orange" style="left:723px;top:429px;width:36px">渠道</div>
<div class="td" style="left:763px;top:430.0px;font-size:13px;letter-spacing:.1px;line-height:20px;color:#606266">202302<span style="letter-spacing:-.7px">1</span>82200<span style="letter-spacing:-.7px">1</span>43592050<span style="letter-spacing:-.7px">1</span>8684</div>
<div class="td" style="left:687px;width:300px;text-align:center;top:453.0px;font-size:13px;line-height:20px;color:#606266">13</div>
<div class="td" style="left:862px;width:300px;text-align:center;top:422.0px;font-size:14px;line-height:20px;color:#606266">￥2.00</div>
<div class="td" style="left:962px;width:300px;text-align:center;top:422.0px;font-size:14px;line-height:20px;color:#606266">￥2.00</div>
<div class="dt orange" style="left:1172px;top:416px;width:70px">全部退款</div>
<div class="dt blue" style="left:1260px;top:416px;width:93px">退款订单生成</div>
<div class="dt grey" style="left:1406px;top:416px;width:58px">未通知</div>
<div class="td" style="left:1419px;width:300px;text-align:center;top:422.0px;font-size:14px;line-height:20px;color:#606266">想退钱</div>
<div class="td" style="left:1539px;width:300px;text-align:center;top:410.5px;font-size:14px;line-height:20px;letter-spacing:.6px;color:#606266">2023-02-18</div>
<div class="td" style="left:1539px;width:300px;text-align:center;top:433.5px;font-size:14px;line-height:20px;letter-spacing:.35px;color:#606266">00:52:41</div>
<div class="td" style="left:1888px;top:422.0px;font-size:12px;line-height:20px;color:#409eff">查看详情</div>
<div class="td" style="left:137px;width:300px;text-align:center;top:560.0px;font-size:14px;line-height:20px;color:#606266">21</div>
<div class="td" style="left:267px;width:300px;text-align:center;top:548.5px;font-size:14px;line-height:20px;color:#606266">支付宝 Wap 网站</div>
<div class="td" style="left:267px;width:300px;text-align:center;top:571.5px;font-size:14px;line-height:20px;color:#606266">支付</div>
<div class="mt blue" style="left:492px;top:535px;width:36px">退款</div>
<div class="td" style="left:532px;top:536.0px;font-size:13px;letter-spacing:.1px;line-height:20px;color:#606266">79728<span style="letter-spacing:-.7px">1</span>8<span style="letter-spacing:-.7px">1</span><span style="letter-spacing:-.7px">1</span>60<span style="letter-spacing:-.7px">1</span>6804</div>
<div class="dt green" style="left:492px;top:573px;width:46px">交易</div>
<div class="td" style="left:542px;top:580.0px;font-size:13px;line-height:20px;color:#606266">53</div>
<div class="mt blue" style="left:745px;top:528px;width:36px">交易</div>
<div class="td" style="left:784px;top:529.0px;font-size:13px;letter-spacing:.1px;line-height:20px;color:#606266">202302<span style="letter-spacing:-.7px">1</span>800344695559<span style="letter-spacing:-.7px">1</span></div>
<div class="mt orange" style="left:723px;top:567px;width:36px">渠道</div>
<div class="td" style="left:763px;top:568.0px;font-size:13px;letter-spacing:.1px;line-height:20px;color:#606266">202302<span style="letter-spacing:-.7px">1</span>82200<span style="letter-spacing:-.7px">1</span>43592050<span style="letter-spacing:-.7px">1</span>8680</div>
<div class="td" style="left:687px;width:300px;text-align:center;top:591.0px;font-size:13px;line-height:20px;color:#606266">83</div>
<div class="td" style="left:862px;width:300px;text-align:center;top:560.0px;font-size:14px;line-height:20px;color:#606266">￥0.01</div>
<div class="td" style="left:962px;width:300px;text-align:center;top:560.0px;font-size:14px;line-height:20px;color:#606266">￥0.01</div>
<div class="dt orange" style="left:1172px;top:554px;width:70px">全部退款</div>
<div class="dt blue" style="left:1260px;top:554px;width:93px">退款订单生成</div>
<div class="dt grey" style="left:1406px;top:554px;width:58px">未通知</div>
<div class="td" style="left:1419px;width:300px;text-align:center;top:560.0px;font-size:14px;line-height:20px;color:#606266">想退钱</div>
<div class="td" style="left:1539px;width:300px;text-align:center;top:548.5px;font-size:14px;line-height:20px;letter-spacing:.6px;color:#606266">2023-02-18</div>
<div class="td" style="left:1539px;width:300px;text-align:center;top:571.5px;font-size:14px;line-height:20px;letter-spacing:.35px;color:#606266">00:37:52</div>
<div class="td" style="left:1888px;top:560.0px;font-size:12px;line-height:20px;color:#409eff">查看详情</div>
<svg style="left:0;top:0" width="1987" height="659"><path d="M512 191.5 L517 196.5 L522 191.5" fill="none" stroke="#c0c4cc" stroke-width="1.1"/><path d="M834 191.5 L839 196.5 L844 191.5" fill="none" stroke="#c0c4cc" stroke-width="1.1"/><path d="M1157 191.5 L1162 196.5 L1167 191.5" fill="none" stroke="#c0c4cc" stroke-width="1.1"/><path d="M1801 191.5 L1806 196.5 L1811 191.5" fill="none" stroke="#c0c4cc" stroke-width="1.1"/><path d="M512 241.5 L517 246.5 L522 241.5" fill="none" stroke="#c0c4cc" stroke-width="1.1"/><g fill="none" stroke="#c0c4cc" stroke-width="1"><rect x="676" y="238.5" width="12" height="11" rx="1"/><path d="M676 241.5 H688"/></g><g fill="#c0c4cc"><rect x="678" y="243" width="1.2" height="1.2"/><rect x="681" y="243" width="1.2" height="1.2"/><rect x="684" y="243" width="1.2" height="1.2"/><rect x="678" y="246" width="1.2" height="1.2"/><rect x="681" y="246" width="1.2" height="1.2"/><rect x="684" y="246" width="1.2" height="1.2"/></g><circle cx="936.3" cy="244" r="4.3" fill="none" stroke="#fff" stroke-width="1.2"/><path d="M939.5 247.2 L941.5 249.2" stroke="#fff" stroke-width="1.2"/><g fill="none" stroke="#606266" stroke-width="1.1"><path d="M1023.5 242 A4.3 4.3 0 0 0 1015.5 243"/><path d="M1015.2 246 A4.3 4.3 0 0 0 1023.4 245.2"/></g><path d="M1023.8 239.8 V243 H1020.6 Z M1015 248.6 V245.4 H1018.2 Z" fill="#606266"/><g fill="none" stroke="#ffba00" stroke-width="1.1"><path d="M244.3 288.6 V294.4 M241.6 291.8 L244.3 294.5 L247 291.8 M240 297.4 H248.6"/></g><circle cx="1916.5" cy="292.5" r="4.3" fill="none" stroke="#606266" stroke-width="1.1"/><path d="M1919.6 295.6 L1921.3 297.3" stroke="#606266" stroke-width="1.1"/><g fill="none" stroke="#606266" stroke-width="1.1"><path d="M1958.5 290.5 A4.3 4.3 0 0 0 1950.5 291.5"/><path d="M1950.2 294.5 A4.3 4.3 0 0 0 1958.4 293.7"/></g><path d="M1958.8 288.3 V291.5 H1955.6 Z M1950 297.1 V293.9 H1953.2 Z" fill="#606266"/><circle cx="1877" cy="431.5" r="4.3" fill="none" stroke="#409eff" stroke-width="1.1"/><path d="M1880.1 434.6 L1881.8 436.3" stroke="#409eff" stroke-width="1.1"/><circle cx="1877" cy="569.5" r="4.3" fill="none" stroke="#409eff" stroke-width="1.1"/><path d="M1880.1 572.6 L1881.8 574.3" stroke="#409eff" stroke-width="1.1"/></svg>
</body></html>
